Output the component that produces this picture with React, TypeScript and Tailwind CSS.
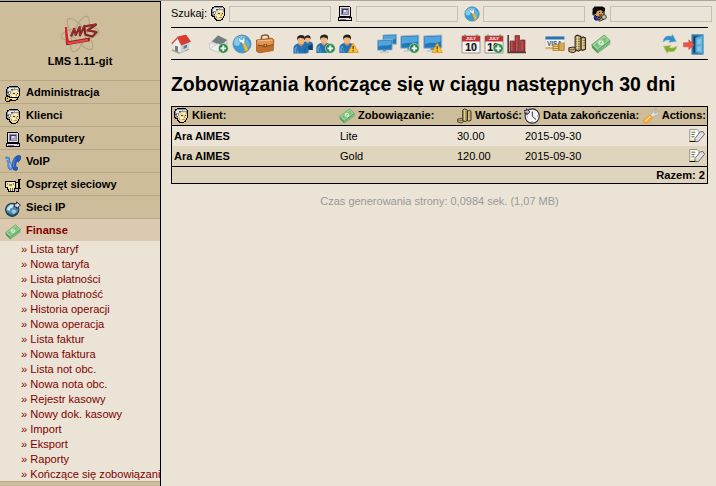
import React from "react";

type IconProps = { size?: number };

function Svg({ size = 16, box = 16, crisp = false, children }: { size?: number; box?: number; crisp?: boolean; children: React.ReactNode }) {
  return (
    <svg className="block shrink-0" width={size} height={size} viewBox={`0 0 ${box} ${box}`} fill="none" shapeRendering={crisp ? "crispEdges" : "auto"}>
      {children}
    </svg>
  );
}

const FaceShapes = () => (
  <>
    <path d="M4 0h9v1h1v1h1v8h-1v2h-1v2h-2v1H6v-1H5v-1H4v-2H2v-1H1V3h1V1h2z" fill="#000" />
    <path d="M4 1h9v1h1v8h-1v2h-1v1h-1v1H7v-1H6v-1H5v-2H3V9H2V3h1V2h1z" fill="#efdb9f" />
    <path d="M4 1h9v1h1v4h-1V4H8v1H6v3H5v2H3V9H2V3h1V2h1z" fill="#8f969b" />
    <path d="M4 2h5v1H4zM3 3h3v2H3zM10 2h3v1h-3z" fill="#e6eaec" />
    <path d="M6 3h2v1H6zM2 6h2v1H2zM4 8h1v1H4z" fill="#4c5358" />
    <path d="M4 6h1v2H4zM7 9h3v2H7zM9 5h3v1H9z" fill="#fff5ce" />
    <path d="M8 7h2v1H8zM12 7h1v1h-1z" fill="#544323" />
    <path d="M11 8h1v2h-1zM9 11h3v1H9zM6 10h1v2H6z" fill="#b89850" />
  </>
);

const FaceIcon = () => <Svg crisp><FaceShapes /></Svg>;

const AdminIcon = () => (
  <Svg crisp>
    <FaceShapes />
    <path d="M1 10h4v1h8v3h-2v-1H6v2H5v1H1v-1H0v-4h1z" fill="#000" />
    <path d="M1 11h3v1h8v1H5v1H4v1H1z" fill="#e9c954" />
    <path d="M2 12h1v1H2z" fill="#000" />
    <path d="M5 12h5v1H5z" fill="#fae79a" />
  </Svg>
);

const ComputerIcon = () => (
  <Svg crisp>
    <path d="M2 0h11v1h1v10h1v4H1v-4h1z" fill="#000" />
    <path d="M3 1h10v9H3zM2 12h12v2H2z" fill="#e3e1e7" />
    <path d="M4 2h8v7H4z" fill="#8b879d" />
    <path d="M5 3h6v5H5z" fill="#3e365b" />
    <path d="M6 4h5v4H6z" fill="#aaa1cb" />
    <path d="M7 4h2v2H7z" fill="#e8e3fa" />
    <path d="M3 13h6v1H3zM12 12h1v1h-1z" fill="#77747d" />
  </Svg>
);

const VoipIcon = () => (
  <Svg>
    <path d="M.5 2.5l1.5-.6 2.3 1 .6 3.7L7.5 12l-.8 2.6-2.2.2-1.7-3.4.2-4z" fill="#6699dc" stroke="#3768b7" strokeWidth=".8" />
    <path d="M15.6 1l-1-.7-3.4.9C8.3 3.6 7.1 7.3 7.2 11l1.2 3.7 2.6.9 1.5-1.1-.1-2.2-1.7-.8c-.2-2.2.5-4 1.7-5.2l1 .7 2.2-2.7z" fill="#285dbb" stroke="#1a438f" strokeWidth=".7" />
    <path d="M10 4.2C8.7 6.5 8.2 9 8.4 12" stroke="#5b91df" />
    <path d="M1 4l2 1M4.5 8L6 12.5" stroke="#a5c9f5" />
  </Svg>
);

const DeviceIcon = () => (
  <Svg crisp>
    <path d="M0 3h11v8h-1v3H3v-2H2v-2H0z" fill="#000" />
    <path d="M1 4h9v6H9v3H4v-2H3V9H1z" fill="#f3e8ae" />
    <path d="M2 5h1v2H2zM4 6h3v2H4zM8 5h1v2H8z" fill="#9d9353" />
    <path d="M5 10h1v3H5zM7 10h1v3H7z" fill="#756b3d" />
    <path d="M13 1h3v1h-1v8h1v1h-2v3h-3v-1h2v-2h-2v-1h2V5h-2V4h2z" fill="#000" />
    <path d="M12 5h1v5h-1z" fill="#ddd9cf" />
  </Svg>
);

const GlobeArrowIcon = () => (
  <Svg>
    <circle cx="7.2" cy="8.8" r="6.6" fill="#5289ae" stroke="#18364b" strokeWidth="1.1" />
    <path d="M2.5 6.5l3-3 3 .3-.7 2.8-2.3.9L4.5 10l-2.7-1.5z" fill="#c7e3ec" />
    <path d="M7 8.5l3.5.5 1 2-2.1 2.8-1.3-1L6.5 11z" fill="#9bc7d8" />
    <path d="M2 11.6c2.6 3.6 7.2 3.7 10 .1" stroke="#23506f" strokeWidth="1.8" />
    <path d="M9.6 2.7h2V.8l3.8 3.4-3.8 3.4V6h-2z" fill="#d7d4ef" stroke="#24202d" strokeWidth=".9" />
  </Svg>
);

const MoneyIcon = ({ size = 16 }: IconProps) => (
  <Svg size={size}>
    <path d="M.5 8.6L.8 11 5.3 15.5 15.5 8 15.3 5z" fill="#4f9b5a" />
    <path d="M5 13.8l10-7.2M5.1 15l10.2-7.6" stroke="#bde0b3" strokeWidth=".5" />
    <path d="M.6 8.6L10.6.8l4.7 4.5L5 13z" fill="#9ed39a" stroke="#57a463" strokeWidth=".7" />
    <path d="M2.8 8.7l7.8-6 2.5 2.8-8 5.8z" fill="#80c283" />
    <ellipse cx="8" cy="7" rx="2.3" ry="2" fill="#d6edcd" />
    <path d="M7.3 7.6l1.5-1.2M3.7 9l1.2-.9M10.8 4.2l.9-.8" stroke="#55a261" strokeWidth=".7" />
  </Svg>
);

const ToolGlobeIcon = ({ size = 16 }: IconProps) => (
  <Svg size={size} box={20}>
    <circle cx="10" cy="10" r="9" fill="#3c9ad4" stroke="#5891b0" />
    <path d="M2 7.5C3.8 2.5 9 .8 14 3.1l-2.2 3.5-3.5 2.1L6.6 12l-4.2-.8z" fill="#84cbea" />
    <path d="M13.7 4.5c4 2.4 5.3 6.7 2.1 10.8l-4 1.7 1.2-5.2z" fill="#5eb5e0" />
    <path d="M7.2 3.2l1.9 2.6 2-.7-.8-2.2c2.5.6 3.4 2.7 2.3 4.9l1 2-2.6 1.4-1.3-2.4C7 8.4 5.7 6.1 7.2 3.2z" fill="#edf4f5" stroke="#52869e" strokeWidth=".6" />
    <path d="M10.6 10.4l2.5-1.3 3 6c.1 1.8-1.7 2.9-3.1 1.8z" fill="#efbf40" stroke="#b58a32" strokeWidth=".6" />
  </Svg>
);

const UserKeyIcon = () => (
  <Svg>
    <path d="M3 11l3-2h6l1 4-2 1H4z" fill="#173ed0" stroke="#0a164d" />
    <path d="M3 4l8-1 2 2v4l-2 2H6L4 9H2V6z" fill="#d99a60" stroke="#000" />
    <path d="M1.5 3l2-2.5h8L14 2v3l-2 1-2-2-4 1-1 3H2z" fill="#080808" />
    <path d="M8 6.5h1M11 6.5h1M8 9h3" stroke="#2f180c" />
    <path d="M6 11l2 2 2-2" stroke="#d83831" />
    <circle cx="13" cy="11" r="2.3" fill="#c3d0a7" stroke="#38462b" />
    <path d="M11.4 12.5L8 15" stroke="#38462b" strokeWidth="2.4" />
    <path d="M11.4 12.5L8.5 14.6" stroke="#c3d0a7" />
  </Svg>
);

const Plus = () => (
  <g>
    <circle cx="14.3" cy="14.4" r="4.9" fill="#278b44" stroke="#dcebd8" strokeWidth=".6" />
    <path d="M11.5 14.4h5.6M14.3 11.6v5.6" stroke="#fff" strokeWidth="1.9" />
  </g>
);
const Warning = () => (
  <g>
    <path d="M14.2 9l5.2 9.5H9z" fill="#ffc32c" stroke="#e19023" strokeWidth=".8" strokeLinejoin="round" />
    <path d="M14.2 12v3.2M14.2 16.2v1.3" stroke="#6c4713" strokeWidth="1.4" />
  </g>
);

const HomeIcon = () => (
  <Svg size={20} box={20}>
    <path d="M1 16l7 3 10-4" stroke="#93a381" strokeWidth="1.5" />
    <path d="M2 9l5-6 3 8v7.8l-8-3z" fill="#f1eee9" stroke="#b6b4b1" strokeWidth=".5" />
    <path d="M10 9l8-2v7.5l-8 4.3z" fill="#c9d2d7" />
    <path d="M6.5 3L15 1l4.5 6.5-9 3.5z" fill="#db3b32" stroke="#b42825" strokeWidth=".6" />
    <path d="M7 3.3L.7 9.7M7 3.3l3.4 7" stroke="#d54b3d" strokeWidth="1.3" />
    <path d="M4 11.8l3 .8V18l-3-1.2z" fill="#77777c" />
    <path d="M12.5 12l3.5-1.3v2.8L12.5 15z" fill="#627c8d" />
  </Svg>
);

const MailIcon = () => (
  <Svg size={20} box={20}>
    <path d="M.8 9.5L9 1.5l9 4.5v10l-9 2-8-3z" fill="#d8d9d8" stroke="#aeb0ae" strokeWidth=".6" />
    <path d="M3 7.5l6-6L18 6l-6 5.5z" fill="#707d83" />
    <path d="M1 9.5l10 2.4L1 15z" fill="#e9eaea" />
    <path d="M1 15l8-5.5 9 5.5-9 3z" fill="#f0f0ef" stroke="#b4b5b3" strokeWidth=".5" />
    <Plus />
  </Svg>
);

const BriefcaseIcon = () => (
  <Svg size={20} box={20}>
    <path d="M6.5 5V2.8C6.6 1 8 1 10.4 1c2.2 0 3.1.5 3.1 1.8V5" stroke="#855735" strokeWidth="1.6" />
    <path d="M1.5 6L17 4.2l1.8 1.6-.6 10.8-14 2.2-2.6-1.5z" fill="#c46f29" stroke="#9c551e" strokeWidth=".8" />
    <path d="M2 6.3l16-1v5.2l-7.3 1.4L2 10.5z" fill="#e1954c" />
    <path d="M3 7l14-1" stroke="#f4c18a" />
    <path d="M3 11l7 1.4 8-1.6" stroke="#87491b" />
    <path d="M8.5 10h3.6v3l-3.6.4z" fill="#845029" />
    <path d="M9.8 10.8h1v1.2h-1z" fill="#f0cc8e" />
  </Svg>
);

const Person = () => (
  <>
    <path d="M.4 19v-5c0-3 2.3-4.7 5-5.3l2.8 1.7 2.5-1.7c3 .7 4.9 2.4 4.9 5.3v4l-2 1z" fill="#2472b4" />
    <path d="M1.5 18v-4l2-2.6 2.2 7z" fill="#5ba2d6" />
    <path d="M11.5 18l1-5M3.8 18v-4" stroke="#17548e" strokeWidth=".8" />
    <path d="M5.3 7.5v2.2L8 12l2.8-2.3V7.5z" fill="#c98d5c" />
    <ellipse cx="8" cy="5.8" rx="3.4" ry="3.9" fill="#ecb885" />
    <path d="M4.2 6V3C4.7.8 8.3-.3 11 1.2c1 .7 1.2 2.5.7 4.8l-1-2-3.6-.7-1.8.8z" fill="#282018" />
  </>
);

const UsersIcon = () => (
  <Svg size={20} box={20}>
    <g transform="translate(8.8 1) scale(.73)"><Person /></g>
    <path d="M12 10l4 2 3-2 1 6h-7z" fill="#173e65" />
    <g transform="translate(0 .5)"><Person /></g>
  </Svg>
);
const UserAddIcon = () => <Svg size={20} box={20}><Person /><Plus /></Svg>;
const UserWarnIcon = () => <Svg size={20} box={20}><Person /><Warning /></Svg>;

const Monitor = () => (
  <>
    <path d="M.8 2l18-1v13l-18 .3z" fill="#2176ba" stroke="#a1b8c6" strokeWidth="1" />
    <path d="M2 3l15.6-.8v5.2C11 10 8 7.5 2 10z" fill="#54a4dc" />
    <path d="M7.5 14h4v2h-4z" fill="#6d91aa" />
    <path d="M4 16l11-.2v1.8L4 18z" fill="#bccdd6" />
  </>
);
const MonitorsIcon = () => (
  <Svg size={20} box={20}>
    <g transform="translate(5.3 -.5) scale(.76)"><Monitor /></g>
    <g transform="translate(-.3 4.5) scale(.82)"><Monitor /></g>
  </Svg>
);
const MonitorAddIcon = () => <Svg size={20} box={20}><Monitor /><Plus /></Svg>;
const MonitorWarnIcon = () => <Svg size={20} box={20}><Monitor /><Warning /></Svg>;

function CalendarIcon({ add = false }: { add?: boolean }) {
  return (
    <Svg size={20} box={20}>
      <path d="M1 2h18v17H1z" fill="#f4f4f2" stroke="#8f8d89" strokeWidth=".9" />
      <path d="M1 2h18v5.5H1z" fill="#c13234" />
      <path d="M4 .5v3M16 .5v3" stroke="#706b6a" strokeWidth="1.2" />
      <text x="10" y="6.1" fontFamily="Liberation Sans, sans-serif" fontSize="4" fontWeight="bold" fill="#fff" textAnchor="middle">JULY</text>
      <text x={add ? 9 : 10} y="16.6" fontFamily="Liberation Sans, sans-serif" fontSize="10.5" fontWeight="bold" fill="#111" stroke="#111" strokeWidth=".2" textAnchor="middle">10</text>
      {add && <Plus />}
    </Svg>
  );
}

const ChartIcon = () => (
  <Svg size={20} box={20}>
    <path d="M3 7h4.5v11H3zM8 1.5h4.5V18H8zM13.5 6h4.5v12h-4.5z" fill="#9b383b" stroke="#7c292d" strokeWidth=".7" />
    <path d="M4 7h1.5v10H4zM9 2.5h1.5V17H9zM14.5 7H16v10h-1.5z" fill="#b95250" />
    <path d="M1.2 1v17.5H19" stroke="#4b3b3b" strokeWidth="1.6" />
  </Svg>
);

const CardIcon = () => (
  <Svg size={20} box={20}>
    <path d="M.5 2.5h18.8V15H.5z" fill="#f5f4ed" stroke="#c8cace" strokeWidth=".6" />
    <path d="M.5 2.5h18.8v3H.5z" fill="#2b71b4" />
    <path d="M.5 13h10v2H.5z" fill="#e1b362" />
    <text x="9.5" y="11.6" fontFamily="Liberation Sans, sans-serif" fontSize="6.4" fontWeight="bold" fill="#24548c" textAnchor="middle">VISA</text>
    <path d="M8 10.5h5.5v6H8zM14 9h5.2v7.5H14z" fill="#f5cf78" stroke="#a87428" strokeWidth=".8" />
    <path d="M8 12.5h5.5M8 14.5h5.5M14 11h5M14 13h5M14 15h5" stroke="#a87428" strokeWidth=".8" />
  </Svg>
);

const CoinsIcon = ({ size = 16 }: IconProps) => (
  <Svg size={size}>
    <path d="M.7 11l4-.6 1.5 1v2.5L4 15 .7 14z" fill="#c7b174" stroke="#33291d" strokeWidth=".8" />
    <path d="M5.7 2l1.7-1.1L10.3 2v10.6l-2 1.1-2.6-1.1zM10.5 3.4l1.7-1L14 3.3v8.9l-2 .9-1.5-.5z" fill="#cdb778" stroke="#33291d" strokeWidth=".9" />
    <path d="M6 4h4M6 6h4M6 8h4M6 10h4M6 12h4M11 5.2h2.5M11 7.2h2.5M11 9.2h2.5M1 12.5h4" stroke="#665231" strokeWidth=".6" />
    <path d="M7.5 2.3v10M11.8 3.8v8" stroke="#f5e6a8" strokeWidth=".7" />
  </Svg>
);

const RefreshIcon = () => (
  <Svg size={20} box={20}>
    <path d="M3.2 8c.4-5 3.6-6.8 8-5.6L12.4.5l3.8 7-7.4.8 1.3-2c-2.5-.6-4.7-.2-6.9 1.7z" fill="#318fc5" stroke="#70b0d1" strokeWidth=".6" />
    <path d="M16.8 12c-.4 4.8-3.7 6.7-8.3 5.3l-1.3 2-3.8-7 7.5-.7-1.3 2.1c2.8.5 4.8.1 7.2-1.7z" fill="#82ad35" stroke="#aec56a" strokeWidth=".6" />
  </Svg>
);

const ExitIcon = () => (
  <Svg size={21} box={20}>
    <path d="M8.5.8H19v18.4H8.5z" fill="#276c99" stroke="#4d91b5" />
    <path d="M10 2.5h8v15h-8z" fill="#123f61" />
    <path d="M12 3.5L19 1v18l-7-1.5z" fill="#59aeda" stroke="#3988b8" strokeWidth=".7" />
    <path d="M13.5 5.5l4-1.3v5.3l-4 .7zM13.5 12l4-.5V17l-4-1z" fill="#82c7e6" />
    <path d="M.5 8.3h5V5.5l5.2 4.8-5.2 4.5v-2.6h-5z" fill="#eb5545" stroke="#d33e35" strokeWidth=".5" />
  </Svg>
);

const ClockIcon = () => (
  <Svg>
    <circle cx="8.2" cy="8" r="7.1" fill="#f4f4f8" stroke="#2d2b30" strokeWidth="1.1" />
    <path d="M8.3 8.2V3.5M8.3 8.2l3.7 3.3" stroke="#333" strokeWidth="1" />
    <path d="M13 8h1M8 13v1M3 9h1" stroke="#888" />
    <path d="M0 2.5h2.5V.8L6 3.8 2.8 6.9V5H0z" fill="#b9b2db" stroke="#292238" strokeWidth=".9" />
  </Svg>
);

const WrenchIcon = () => (
  <Svg>
    <path d="M13.8.7L11 2.8l.4 2.1 2 .3 2.3-2.4c.6 2.8-1 5-3.7 4.8L9.7 9.8 7.1 7.3l2.2-2.4C9.1 2.3 11.3.3 13.8.7z" fill="#e1e1e4" stroke="#a3a0a4" strokeWidth=".7" />
    <path d="M7.3 7l2.5 2.5-4.9 5c-1.2 1.3-2.8 1.4-3.8.4-1-1.1-.8-2.5.4-3.6z" fill="#ffad32" stroke="#e4912f" strokeWidth=".8" />
    <path d="M7.3 8.5l-5.1 4.6" stroke="#ffe092" strokeWidth="1.2" />
  </Svg>
);

const EditIcon = () => (
  <Svg>
    <path d="M.8 1.5H8l2 2v9.5H.8z" fill="#fffdf3" stroke="#888" strokeWidth=".9" />
    <path d="M.5 13.5h7" stroke="#111" />
    <path d="M2.5 4.2h3.8M2.5 6.5h3M2.5 8.8h3" stroke="#516950" />
    <path d="M1 11h3.5v1.7H1z" fill="#f5ea87" />
    <path d="M5.7 10.8l5.6-7 2.6-.3 1.7 2.7-6.2 7.3-2.9.2z" fill="#d5d5d7" stroke="#626268" strokeWidth=".9" />
    <path d="M7.3 10.6l5-6M9 11.7l5-6" stroke="#fff" strokeWidth=".7" />
  </Svg>
);

const Logo = () => (
  <svg className="block" width="40" height="40" viewBox="0 0 40 40" fill="none">
    <g stroke="#b1a386" strokeWidth="1.1">
      <ellipse cx="20" cy="20" rx="6.5" ry="19" transform="rotate(22 20 20)" />
      <ellipse cx="20" cy="20" rx="6.5" ry="19" transform="rotate(82 20 20)" />
      <ellipse cx="20" cy="20" rx="6.5" ry="19" transform="rotate(-38 20 20)" />
    </g>
    <path d="M6 13l1 17.5 22-3.8v-2.4L9 28" fill="#b72027" stroke="#74201f" strokeWidth="1.4" />
    <path d="M6 13l1 17" stroke="#d6232c" strokeWidth="2.2" />
    <path d="M8 29.3l20-3.4" stroke="#ed4548" strokeWidth="2.2" />
    <path d="M11 22.5l3.2-7.5 1.5 6 4-8 .2 8.5L24.5 12l.5 8M24 12.5l12-2-8.5 6 9 1.5-4 4.5-8-2" stroke="#7d2021" strokeWidth="2.2" strokeLinejoin="round" />
    <path d="M11 22l3.2-7.5 1.5 6 4-8 .2 8.5L24.5 11.5M24 12l12-2-8.5 6 9 1.5-4 4.5" stroke="#a52c31" strokeWidth="1" />
  </svg>
);

const menu = [
  { label: "Administracja", Icon: AdminIcon },
  { label: "Klienci", Icon: FaceIcon },
  { label: "Komputery", Icon: ComputerIcon },
  { label: "VoIP", Icon: VoipIcon },
  { label: "Osprzęt sieciowy", Icon: DeviceIcon },
  { label: "Sieci IP", Icon: GlobeArrowIcon },
  { label: "Finanse", Icon: MoneyIcon },
];

const submenu = [
  "Lista taryf", "Nowa taryfa", "Lista płatności", "Nowa płatność", "Historia operacji", "Nowa operacja",
  "Lista faktur", "Nowa faktura", "Lista not obc.", "Nowa nota obc.", "Rejestr kasowy", "Nowy dok. kasowy",
  "Import", "Eksport", "Raporty", "Kończące się zobowiązania",
];

const rows = [
  { client: "Ara AIMES", name: "Lite", value: "30.00", date: "2015-09-30", bg: "bg-[#ebe4d6]" },
  { client: "Ara AIMES", name: "Gold", value: "120.00", date: "2015-09-30", bg: "bg-[#dfd5bd]" },
];

const columns = "grid grid-cols-[166px_117px_68px_117px_1fr] items-center pl-0.5";

function Sidebar() {
  return (
    <aside className="flex w-[161px] shrink-0 flex-col overflow-hidden border-t border-r border-black bg-[#cebd9b]">
      <div className="flex h-[78px] shrink-0 flex-col items-center pt-3">
        <Logo />
        <div className="text-[11.1px] leading-[14px] font-bold">LMS 1.11-git</div>
      </div>
      {menu.map(({ label, Icon }) => (
        <div key={label} className={`flex h-[23px] shrink-0 items-start gap-[5px] border-t border-[#b9a785] pl-[5px] ${label === "Finanse" ? "bg-[#dbcab1] text-[#800000]" : ""}`}>
          <div className="pt-[5px]"><Icon /></div>
          <span className="pt-1 text-[11.1px] leading-[14px] font-bold">{label}</span>
        </div>
      ))}
      <ul className="h-[240px] shrink-0 bg-[#ebe4d6] pt-px pl-[21px] text-[11.1px] text-[#800000]">
        {submenu.map((s) => <li key={s} className="h-[15px] leading-[15px] whitespace-nowrap">» {s}</li>)}
      </ul>
      <div className="h-[10px] shrink-0 border-t border-[#b9a785]" />
    </aside>
  );
}

function SearchField({ icon }: { icon: React.ReactNode }) {
  return (
    <div className="flex shrink-0 items-center gap-[3px]">
      {icon}
      <input aria-label="Szukaj" className="h-4 w-[102px] border border-[#bfbfbf] bg-[#ebe4d6] outline-none" />
    </div>
  );
}

function ToolGroup({ children }: { children: React.ReactNode }) {
  return <div className="flex shrink-0 gap-[3px]">{children}</div>;
}

export default function App() {
  return (
    <div className="flex h-[486px] w-[716px] overflow-hidden border-t border-[#aaa59b] bg-[#ebe4d6] font-['Liberation_Sans',Arial,sans-serif] text-[11px] text-black">
      <Sidebar />
      <main className="flex min-w-0 flex-1 flex-col pl-[10px]">
        <div className="flex h-[26px] shrink-0 items-center">
          <span className="w-[39px] shrink-0 pb-[2px]">Szukaj:</span>
          <div className="flex gap-[6px]">
            <SearchField icon={<FaceIcon />} />
            <SearchField icon={<ComputerIcon />} />
            <SearchField icon={<ToolGlobeIcon />} />
            <SearchField icon={<UserKeyIcon />} />
          </div>
        </div>
        <nav className="mr-2 flex h-[33px] shrink-0 items-start border-y border-black pt-1.5">
          <div className="w-[38px]"><HomeIcon /></div>
          <div className="w-[84px]"><ToolGroup><MailIcon /><ToolGlobeIcon size={20} /><BriefcaseIcon /></ToolGroup></div>
          <div className="w-[84px]"><ToolGroup><UsersIcon /><UserAddIcon /><UserWarnIcon /></ToolGroup></div>
          <div className="w-[84px]"><ToolGroup><MonitorsIcon /><MonitorAddIcon /><MonitorWarnIcon /></ToolGroup></div>
          <div className="w-[84px]"><ToolGroup><CalendarIcon /><CalendarIcon add /><ChartIcon /></ToolGroup></div>
          <ToolGroup><CardIcon /><CoinsIcon size={20} /><MoneyIcon size={20} /></ToolGroup>
          <div className="ml-auto pr-[4px]"><ToolGroup><RefreshIcon /><ExitIcon /></ToolGroup></div>
        </nav>
        <h1 className="mt-3 text-[19.46px] leading-6 font-bold whitespace-nowrap">Zobowiązania kończące się w ciągu następnych 30 dni</h1>
        <section className="mt-[10px] mr-2 border border-black">
          <div className={`${columns} h-[19px] border-b border-black bg-[#cebd9b] text-[11.1px] leading-4 font-bold whitespace-nowrap`}>
            <div className="-ml-px flex items-center gap-[3px]"><FaceIcon /><span className="pb-0.5">Klient:</span></div>
            <div className="-ml-px flex items-center gap-[3px]"><MoneyIcon /><span className="pb-0.5">Zobowiązanie:</span></div>
            <div className="flex items-center gap-[2px]"><CoinsIcon /><span className="pb-0.5">Wartość:</span></div>
            <div className="-ml-px flex items-center gap-[3px]"><ClockIcon /><span className="pb-0.5">Data zakończenia:</span></div>
            <div className="flex items-center justify-end gap-[3px] pr-px"><WrenchIcon /><span className="pb-0.5">Actions:</span></div>
          </div>
          {rows.map((r) => (
            <div key={r.name} className={`${columns} h-5 ${r.bg}`}>
              <strong>{r.client}</strong><span>{r.name}</span><span>{r.value}</span><span>{r.date}</span>
              <div className="flex justify-end pr-0.5"><EditIcon /></div>
            </div>
          ))}
          <div className="h-[17px] border-t border-black bg-[#dfd5bd] pr-0.5 text-right text-[11.1px] leading-4 font-bold">Razem: 2</div>
        </section>
        <footer className="mt-[10px] mr-2 text-center leading-[15px] text-[#999]">Czas generowania strony: 0,0984 sek. (1,07 MB)</footer>
      </main>
    </div>
  );
}
